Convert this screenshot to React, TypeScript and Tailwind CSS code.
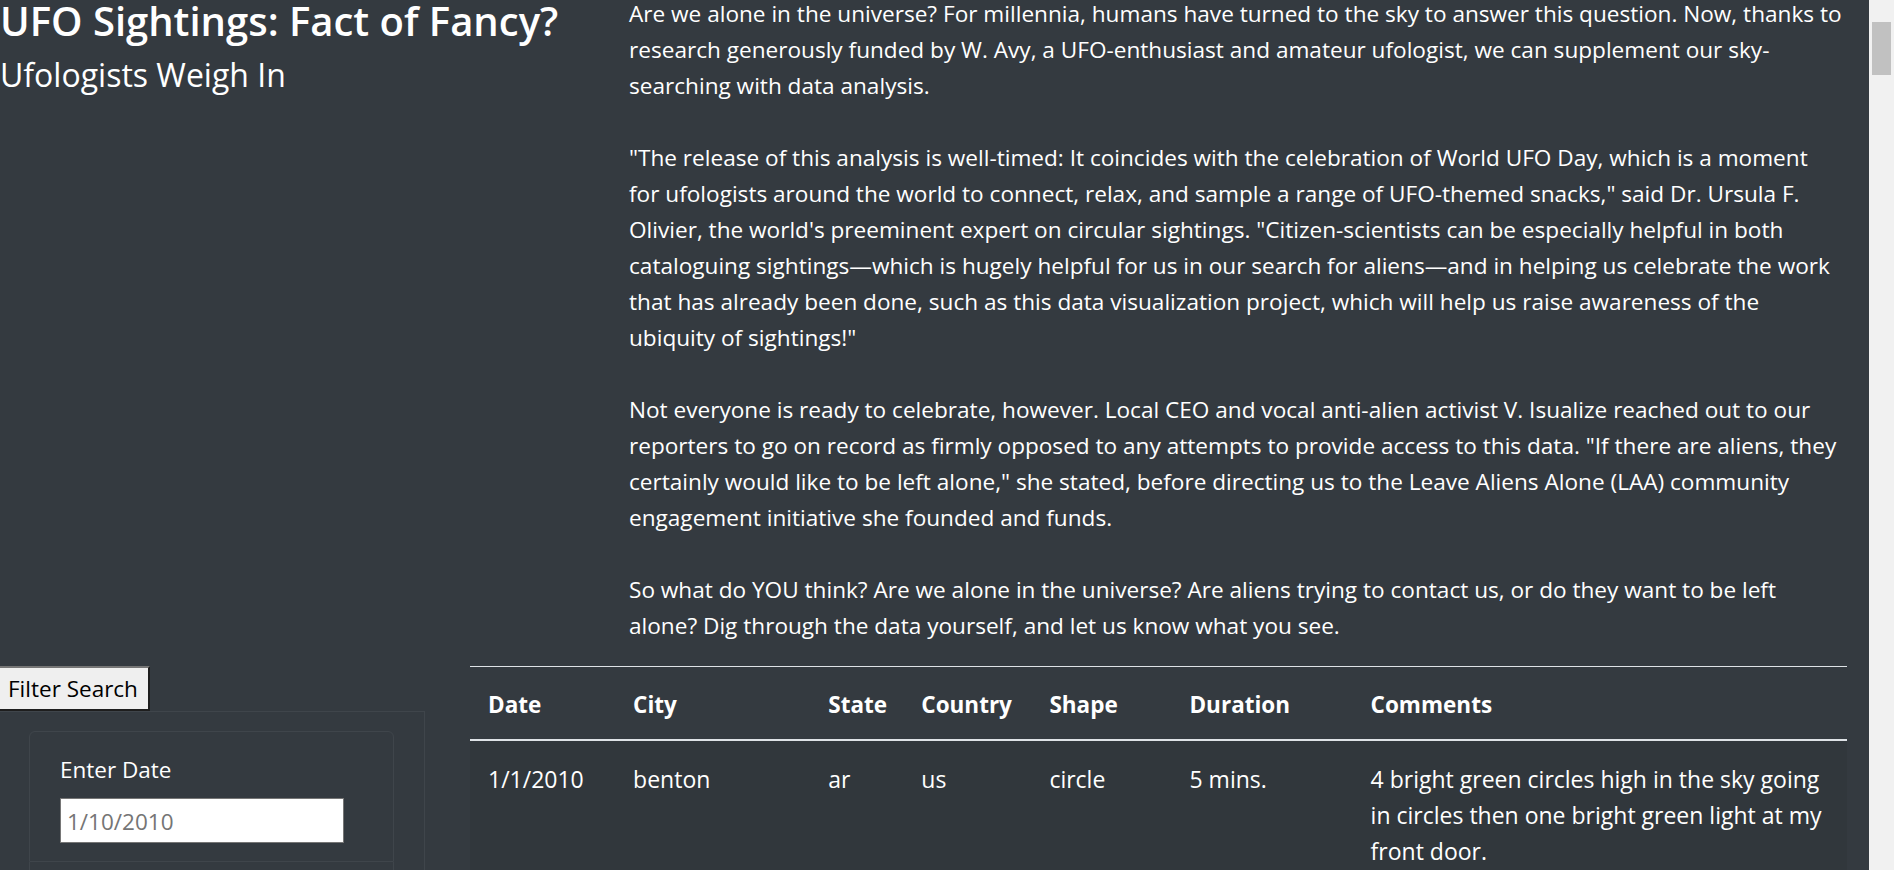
import React from "react";

const lines1 = [
  "Are we alone in the universe? For millennia, humans have turned to the sky to answer this question. Now, thanks to",
  "research generously funded by W. Avy, a UFO-enthusiast and amateur ufologist, we can supplement our sky-",
  "searching with data analysis.",
];
const lines2 = [
  "\"The release of this analysis is well-timed: It coincides with the celebration of World UFO Day, which is a moment",
  "for ufologists around the world to connect, relax, and sample a range of UFO-themed snacks,\" said Dr. Ursula F.",
  "Olivier, the world's preeminent expert on circular sightings. \"Citizen-scientists can be especially helpful in both",
  "cataloguing sightings\u2014which is hugely helpful for us in our search for aliens\u2014and in helping us celebrate the work",
  "that has already been done, such as this data visualization project, which will help us raise awareness of the",
  "ubiquity of sightings!\"",
];
const lines3 = [
  "Not everyone is ready to celebrate, however. Local CEO and vocal anti-alien activist V. Isualize reached out to our",
  "reporters to go on record as firmly opposed to any attempts to provide access to this data. \"If there are aliens, they",
  "certainly would like to be left alone,\" she stated, before directing us to the Leave Aliens Alone (LAA) community",
  "engagement initiative she founded and funds.",
];
const lines4 = [
  "So what do YOU think? Are we alone in the universe? Are aliens trying to contact us, or do they want to be left",
  "alone? Dig through the data yourself, and let us know what you see.",
];

function Lines({ lines }: { lines: string[] }) {
  return (
    <>
      {lines.map((l, i) => (
        <span key={i} className="block whitespace-nowrap">
          {l}
        </span>
      ))}
    </>
  );
}

const headers = [
  { t: "Date", w: "w-[145px]" },
  { t: "City", w: "w-[195px]" },
  { t: "State", w: "w-[93px]" },
  { t: "Country", w: "w-[128px]" },
  { t: "Shape", w: "w-[140px]" },
  { t: "Duration", w: "w-[181px]" },
  { t: "Comments", w: "w-[494px]" },
];

export default function App() {
  return (
    <div className="flex h-[870px] w-[1894px] overflow-hidden bg-[#343a40] font-['Open_Sans',sans-serif] text-white">
      <div className="w-[1869px] shrink-0 -mt-[4px]">
        <div className="flex">
          <div className="w-[629px] shrink-0">
            <h1 className="mt-[1px] text-[40px] font-semibold leading-[48px] whitespace-nowrap">
              UFO Sightings: Fact of Fancy?
            </h1>
            <h2 className="mt-[11px] text-[32px] leading-[38px] whitespace-nowrap">Ufologists Weigh In</h2>
          </div>
          <div className="mb-[22px] w-[1218px] shrink-0 text-[22.6px] leading-[36px]">
            <Lines lines={lines1} />
            <span className="block h-[36px]" />
            <Lines lines={lines2} />
            <span className="block h-[36px]" />
            <Lines lines={lines3} />
            <span className="block h-[36px]" />
            <Lines lines={lines4} />
          </div>
        </div>
        <div className="flex">
          <div className="w-[470px] shrink-0">
            <button className="block h-[45px] w-[150px] border-t-2 border-r-2 border-b-2 border-t-[#767676] border-r-[#1e1e1e] border-b-[#1e1e1e] bg-[#efefef] pt-[2px] pl-[8px] text-left text-[22.5px] leading-none text-black">
              Filter Search
            </button>
            <div className="h-[300px] w-[425px] border-t border-r border-[#3f454b] pt-[19px] pl-[29px]">
              <ul className="w-[365px]">
                <li className="rounded-t-[6px] border border-[#3f454b] px-[30px] pt-[20px] pb-[18px]">
                  <label className="mb-[10px] block text-[22.5px] leading-[36px]">Enter Date</label>
                  <input
                    type="text"
                    placeholder="1/10/2010"
                    className="block h-[45px] w-[284px] border border-[#767676] bg-white px-[6px] pt-[2px] text-[22.5px] text-black outline-none placeholder:text-[#757575]"
                  />
                </li>
                <li className="border border-t-0 border-[#3f454b] px-[30px] pt-[20px] pb-[18px]">
                  <label className="mb-[10px] block text-[22.5px] leading-[36px]">Enter City</label>
                  <input
                    type="text"
                    placeholder="roswell"
                    className="block h-[45px] w-[284px] border border-[#767676] bg-white px-[6px] pt-[2px] text-[22.5px] text-black outline-none placeholder:text-[#757575]"
                  />
                </li>
              </ul>
            </div>
          </div>
          <table className="w-[1377px] shrink-0 table-fixed border-collapse text-[23px] leading-[36px]">
            <thead>
              <tr>
                {headers.map((h) => (
                  <th
                    key={h.t}
                    className={`${h.w} border-t border-b-2 border-t-[#dee2e6] border-b-[#dee2e6] px-[18px] pt-[20px] pb-[16px] text-left align-bottom text-[22.5px] font-bold`}
                  >
                    {h.t}
                  </th>
                ))}
              </tr>
            </thead>
            <tbody>
              <tr className="bg-black/5 align-top">
                <td className="px-[18px] pt-[20px] pb-[16px]">1/1/2010</td>
                <td className="px-[18px] pt-[20px] pb-[16px]">benton</td>
                <td className="px-[18px] pt-[20px] pb-[16px]">ar</td>
                <td className="px-[18px] pt-[20px] pb-[16px]">us</td>
                <td className="px-[18px] pt-[20px] pb-[16px]">circle</td>
                <td className="px-[18px] pt-[20px] pb-[16px]">5 mins.</td>
                <td className="px-[18px] pt-[20px] pb-[16px]">
                  <span className="block whitespace-nowrap">4 bright green circles high in the sky going</span>
                  <span className="block whitespace-nowrap">in circles then one bright green light at my</span>
                  <span className="block whitespace-nowrap">front door.</span>
                </td>
              </tr>
              <tr className="align-top">
                <td className="px-[18px] pt-[20px] pb-[16px]">1/1/2010</td>
                <td className="px-[18px] pt-[20px] pb-[16px]">bonita</td>
                <td className="px-[18px] pt-[20px] pb-[16px]">ca</td>
                <td className="px-[18px] pt-[20px] pb-[16px]">us</td>
                <td className="px-[18px] pt-[20px] pb-[16px]">light</td>
                <td className="px-[18px] pt-[20px] pb-[16px]">13 minutes</td>
                <td className="px-[18px] pt-[20px] pb-[16px]">Three bright red lights witnessed floating stationary over San Diego New Years Day</td>
              </tr>
            </tbody>
          </table>
        </div>
      </div>
      <div className="w-[25px] shrink-0 bg-[#f1f1f1]">
        <div className="mt-[22px] ml-[3px] h-[53px] w-[19px] bg-[#c1c1c1]" />
      </div>
    </div>
  );
}
